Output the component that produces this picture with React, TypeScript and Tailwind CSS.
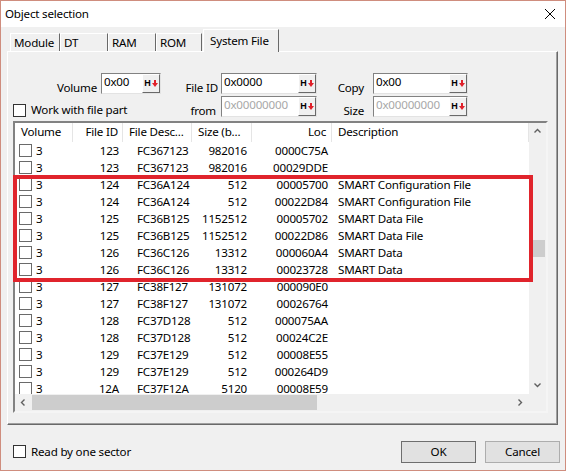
import React from "react";

const rows: [string, string, string, string, string][] = [
  ["123", "FC367123", "982016", "0000C75A", ""],
  ["123", "FC367123", "982016", "00029DDE", ""],
  ["124", "FC36A124", "512", "00005700", "SMART Configuration File"],
  ["124", "FC36A124", "512", "00022D84", "SMART Configuration File"],
  ["125", "FC36B125", "1152512", "00005702", "SMART Data File"],
  ["125", "FC36B125", "1152512", "00022D86", "SMART Data File"],
  ["126", "FC36C126", "13312", "000060A4", "SMART Data"],
  ["126", "FC36C126", "13312", "00023728", "SMART Data"],
  ["127", "FC38F127", "131072", "000090E0", ""],
  ["127", "FC38F127", "131072", "00026764", ""],
  ["128", "FC37D128", "512", "000075AA", ""],
  ["128", "FC37D128", "512", "00024C2E", ""],
  ["129", "FC37E129", "512", "00008E55", ""],
  ["129", "FC37E129", "512", "000264D9", ""],
  ["12A", "FC37F12A", "5120", "00008E59", ""],
];

function HexButton() {
  return (
    <div className="flex h-full w-[18px] shrink-0 items-center justify-center gap-[1px] border border-t-white border-l-white border-r-[#696969] border-b-[#696969] bg-[#f0f0f0]">
      <span className="font-['Liberation_Sans',sans-serif] text-[9px] font-bold leading-none tracking-normal text-black">H</span>
      <svg width="6" height="7" viewBox="0 0 6 7">
        <rect x="2" y="0" width="2" height="3" fill="#e0202a" />
        <polygon points="0,3 6,3 3,7" fill="#e0202a" />
      </svg>
    </div>
  );
}

function HexInput({ value, width, disabled }: { value: string; width: string; disabled?: boolean }) {
  return (
    <div className={`flex h-[21px] shrink-0 ${width} border border-t-[#828282] border-l-[#828282] border-r-[#e3e3e3] border-b-[#e3e3e3] bg-white`}>
      <span className={`flex-1 pl-[2px] leading-[16px] ${disabled ? "text-[#a8a8a8]" : "text-black"}`}>{value}</span>
      <HexButton />
    </div>
  );
}

function CheckBox() {
  return <div className="h-[13px] w-[13px] shrink-0 border border-[#333333] bg-white" />;
}

function ListCheck() {
  return <div className="h-[13px] w-[13px] shrink-0 border border-[#6a6a6a] bg-white" />;
}

function Chevron({ dir }: { dir: "up" | "down" | "left" | "right" }) {
  const pts: Record<string, string> = {
    up: "0.5,4.5 3.5,1.5 6.5,4.5",
    down: "0.5,1.5 3.5,4.5 6.5,1.5",
    left: "4.5,0.5 1.5,3.5 4.5,6.5",
    right: "1.5,0.5 4.5,3.5 1.5,6.5",
  };
  return (
    <svg width="7" height="7" viewBox="0 0 7 7">
      <polyline points={pts[dir]} fill="none" stroke="#606060" strokeWidth="1.4" />
    </svg>
  );
}

export default function App() {
  return (
    <div className="box-border flex h-[471px] w-[566px] flex-col overflow-hidden border border-[#cf8d7e] bg-[#f0f0f0] font-['Noto_Sans',sans-serif] text-[11.6px] tracking-[-0.2px] text-black">
      {/* Title bar */}
      <div className="flex h-[26px] shrink-0 items-center justify-between bg-white pl-[4px] pr-[9px]">
        <span className="leading-[16px]">Object selection</span>
        <svg width="12" height="12" viewBox="0 0 12 12">
          <line x1="1" y1="1" x2="11" y2="11" stroke="#000" strokeWidth="1" />
          <line x1="11" y1="1" x2="1" y2="11" stroke="#000" strokeWidth="1" />
        </svg>
      </div>

      {/* Tabs */}
      <div className="flex h-[24px] shrink-0 items-end pl-[9px]">
        {[
          ["Module", "w-[50px]"],
          ["DT", "w-[48px]"],
          ["RAM", "w-[48px]"],
          ["ROM", "w-[46px]"],
        ].map(([t, w]) => (
          <div
            key={t}
            className={`flex h-[18px] ${w} items-center whitespace-nowrap border-l border-t border-r border-l-white border-t-white border-r-[#696969] pl-[3px] leading-[16px]`}
          >
            {t}
          </div>
        ))}
        <div className="relative z-10 mb-[-1px] ml-[1px] flex h-[23px] w-[76px] items-center whitespace-nowrap border-l border-t border-r border-l-white border-t-white border-r-[#696969] bg-[#f0f0f0] pl-[6px] leading-[16px]">
          System File
        </div>
      </div>

      {/* Tab panel */}
      <div className="ml-[6px] flex h-[374px] w-[551px] shrink-0 flex-col border border-t-white border-l-white border-r-[#696969] border-b-[#696969] shadow-[inset_-1px_-1px_0_#a0a0a0]">
        {/* Row 1 */}
        <div className="mt-[21px] flex h-[21px] items-start">
          <div className="mt-[7px] w-[93px] shrink-0 pr-[4px] text-right leading-[16px]">Volume</div>
          <HexInput value="0x00" width="w-[60px]" />
          <div className="mt-[7px] w-[60px] shrink-0 pr-[3px] text-right leading-[16px]">File ID</div>
          <HexInput value="0x0000" width="w-[96px]" />
          <div className="mt-[7px] w-[56px] shrink-0 pr-[9px] text-right leading-[16px]">Copy</div>
          <HexInput value="0x00" width="w-[95px]" />
        </div>
        {/* Row 2 */}
        <div className="mt-[2px] flex h-[21px] items-start">
          <div className="mt-[6px] flex w-[153px] shrink-0 items-center pl-[5px]">
            <CheckBox />
            <span className="ml-[5px] leading-[16px]">Work with file part</span>
          </div>
          <div className="mt-[7px] w-[60px] shrink-0 pr-[5px] text-right leading-[16px]">from</div>
          <HexInput value="0x00000000" width="w-[96px]" disabled />
          <div className="mt-[7px] w-[56px] shrink-0 pr-[9px] text-right leading-[16px]">Size</div>
          <HexInput value="0x00000000" width="w-[95px]" disabled />
        </div>

        {/* List view */}
        <div className="relative ml-[5px] mt-[4px] flex h-[292px] w-[535px] shrink-0 border-2 border-t-[#828282] border-l-[#828282] border-r-[#f5f5f5] border-b-[#f5f5f5] bg-white">
          <div className="flex w-[514px] flex-col">
            {/* Header */}
            <div className="flex h-[19px] shrink-0 items-center leading-[16px]">
              <div className="h-full w-[58px] border-r border-[#e5e5e5] pl-[6px] pt-[1px]">Volume</div>
              <div className="h-full w-[50px] border-r border-[#e5e5e5] pr-[4px] pt-[1px] text-right">File ID</div>
              <div className="h-full w-[69px] whitespace-nowrap border-r border-[#e5e5e5] pl-[6px] pt-[1px]">File Desc...</div>
              <div className="h-full w-[60px] whitespace-nowrap border-r border-[#e5e5e5] pl-[6px] pt-[1px]">Size (b...</div>
              <div className="h-full w-[80px] border-r border-[#e5e5e5] pr-[5px] pt-[1px] text-right">Loc</div>
              <div className="h-full flex-1 border-r border-[#e5e5e5] pl-[6px] pt-[1px]">Description</div>
            </div>
            {/* Rows */}
            <div className="flex-1 overflow-hidden">
              {rows.map((r, i) => (
                <div key={i} className="flex h-[17px] items-center leading-[16px]">
                  <div className="flex w-[58px] items-center pl-[4px]">
                    <ListCheck />
                    <span className="ml-[4px]">3</span>
                  </div>
                  <div className="w-[50px] pr-[4px] text-right">{r[0]}</div>
                  <div className="w-[69px] pl-[14px]">{r[1]}</div>
                  <div className="w-[60px] pr-[5px] text-right">{r[2]}</div>
                  <div className="w-[80px] pr-[4px] text-right">{r[3]}</div>
                  <div className="flex-1 whitespace-nowrap pl-[6px]">{r[4]}</div>
                </div>
              ))}
            </div>
            {/* Horizontal scrollbar */}
            <div className="flex h-[17px] shrink-0 items-center bg-[#f0f0f0]">
              <div className="flex h-full w-[17px] items-center justify-center">
                <Chevron dir="left" />
              </div>
              <div className="h-[15px] w-[285px] bg-[#cdcdcd]" />
              <div className="flex-1" />
              <div className="flex h-full w-[17px] items-center justify-center">
                <Chevron dir="right" />
              </div>
            </div>
          </div>
          {/* Vertical scrollbar */}
          <div className="flex w-[17px] flex-col">
            <div className="flex flex-1 flex-col bg-[#f0f0f0]">
              <div className="flex h-[17px] items-center justify-center">
                <Chevron dir="up" />
              </div>
              <div className="mt-[100px] ml-[1px] h-[17px] w-[15px] bg-[#cdcdcd]" />
              <div className="flex-1" />
              <div className="flex h-[17px] items-center justify-center">
                <Chevron dir="down" />
              </div>
            </div>
            <div className="h-[17px] bg-[#f0f0f0]" />
          </div>

          {/* Red highlight */}
          <div className="pointer-events-none absolute left-[-2px] top-[52px] h-[107px] w-[520px] border-4 border-[#e0242c]" />
        </div>
      </div>

      {/* Bottom */}
      <div className="flex flex-1 items-center pt-[8px]">
        <div className="ml-[12px] flex items-center">
          <CheckBox />
          <span className="ml-[5px] leading-[16px]">Read by one sector</span>
        </div>
        <div className="flex-1" />
        <div className="flex h-[22px] w-[75px] items-center justify-center border border-[#6e6e6e] bg-[#e1e1e1] leading-[16px]">OK</div>
        <div className="ml-[9px] mr-[5px] flex h-[22px] w-[75px] items-center justify-center border border-[#adadad] bg-[#e1e1e1] leading-[16px]">Cancel</div>
      </div>
    </div>
  );
}
